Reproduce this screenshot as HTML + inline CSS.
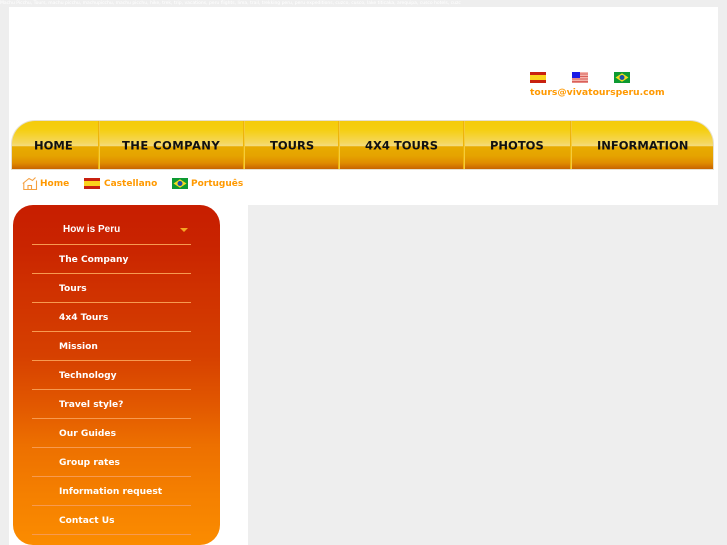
<!DOCTYPE html>
<html>
<head>
<meta charset="utf-8">
<style>
html,body{margin:0;padding:0;width:727px;height:545px;overflow:hidden;background:#eeeeee;font-family:"DejaVu Sans",sans-serif}
.a{position:absolute}
#page{position:relative;width:727px;height:545px;overflow:hidden;filter:blur(.3px)}
.nav{position:absolute;top:146px;line-height:1;transform:translateY(-50%);font-size:11.5px;font-weight:bold;color:#111;white-space:nowrap}
.sep{position:absolute;top:121px;width:1px;height:48px;background:#eeb40a;box-shadow:1px 0 0 #f5cb3a}
.lnk{position:absolute;font-size:9px;font-weight:bold;color:#ff9900;white-space:nowrap;line-height:12px}
.m{position:absolute;left:59px;font-size:9.1px;font-weight:bold;color:#fff;white-space:nowrap;line-height:12px}
.l{position:absolute;left:32px;width:159px;height:1px;background:#f79a50}
svg{display:block;position:absolute}
</style>
</head>
<body>
<div id="page">
<div class="a" style="left:0;top:0;width:461px;font-size:4.5px;line-height:7px;color:#fff;white-space:nowrap;overflow:hidden">Machu Picchu, Tours, machu picchu, machupicchu, machu picchu, hike, trek, trip, vacations, peru flights, lima, trail, trekking peru, peru expeditions, cuzco, cusco, lake titicaka, arequipa, cusco hotels, cuzco, nazca, arequipa</div>
<div class="a" style="left:9px;top:7px;width:709px;height:198px;background:#fff"></div>
<div class="a" style="left:9px;top:205px;width:239px;height:340px;background:#fff"></div>

<!-- header flags -->
<svg style="left:530px;top:72px" width="16" height="11" viewBox="0 0 16 11"><rect width="16" height="11" fill="#c8200f"/><rect y="3" width="16" height="5" fill="#fbd21c"/></svg>
<svg style="left:572px;top:72px" width="16" height="11" viewBox="0 0 16 11"><rect width="16" height="11" fill="#f4b4ac"/><rect y="1.5" width="16" height="1" fill="#d9605a"/><rect y="4" width="16" height="1" fill="#d9605a"/><rect y="6.500" width="16" height="1" fill="#d9605a"/><rect y="9" width="16" height="1.500" fill="#d9605a"/><rect width="8" height="6" fill="#1a1ae6"/></svg>
<svg style="left:614px;top:72px" width="16" height="11" viewBox="0 0 16 11"><rect width="16" height="11" fill="#0d9a32"/><path d="M8 1.200L14.500 5.500 8 9.800 1.500 5.500z" fill="#f2dc20"/><circle cx="8" cy="5.500" r="2.500" fill="#1c4fa8"/></svg>
<div class="lnk" style="left:530px;top:87px;font-size:9.25px">tours@vivatoursperu.com</div>

<!-- nav bar -->
<div class="a" style="left:11px;top:120px;width:703px;height:50px;border-radius:24px 24px 0 0;background:#e6e0d0"></div>
<div class="a" style="left:12px;top:121px;width:701px;height:48px;border-radius:23px 23px 0 0;background:linear-gradient(to bottom,#f5cb0b 0,#f5cf12 9px,#f5d75e 22px,#f3dc80 25px,#e8ab00 25.500px,#e5a300 35px,#e08c00 42px,#c86400 48px)"></div>
<div class="sep" style="left:98px"></div>
<div class="sep" style="left:243px"></div>
<div class="sep" style="left:338px"></div>
<div class="sep" style="left:463px"></div>
<div class="sep" style="left:570px"></div>
<div class="nav" style="left:34px">HOME</div>
<div class="nav" style="left:122px;letter-spacing:.45px">THE COMPANY</div>
<div class="nav" style="left:270px">TOURS</div>
<div class="nav" style="left:365px">4X4 TOURS</div>
<div class="nav" style="left:490px">PHOTOS</div>
<div class="nav" style="left:597px">INFORMATION</div>

<!-- language row -->
<svg style="left:22px;top:176px" width="16" height="14" viewBox="0 0 16 14" fill="none" stroke="#f5a040" stroke-width="1.100"><path d="M.8 7.500L7 2.500 10.500 4.500 13.500 1.500M1.800 7V13.500H14.500V4.500"/><path d="M6 13.500V9.500H9.500V13.500"/></svg>
<div class="lnk" style="left:40px;top:178px">Home</div>
<svg style="left:84px;top:178px" width="16" height="11" viewBox="0 0 16 11"><rect width="16" height="11" fill="#c8200f"/><rect y="3" width="16" height="5" fill="#fbd21c"/></svg>
<div class="lnk" style="left:104px;top:178px">Castellano</div>
<svg style="left:172px;top:178px" width="16" height="11" viewBox="0 0 16 11"><rect width="16" height="11" fill="#0d9a32"/><path d="M8 1.200L14.500 5.500 8 9.800 1.500 5.500z" fill="#f2dc20"/><circle cx="8" cy="5.500" r="2.500" fill="#1c4fa8"/></svg>
<div class="lnk" style="left:191px;top:178px">Português</div>

<!-- side menu -->
<div class="a" style="left:13px;top:205px;width:207px;height:340px;border-radius:20px;background:linear-gradient(to bottom,#c81e00 0,#c92400 40px,#cf3000 80px,#d64000 150px,#e25800 200px,#ed7000 240px,#f58000 290px,#fb8c00 340px)"></div>
<div class="a" style="left:63px;top:224px;font-weight:bold;color:#fff;line-height:12px;font-family:'Liberation Sans',sans-serif;font-size:10px">How is Peru</div>
<div class="a" style="left:180px;top:228px;width:0;height:0;border-left:4px solid transparent;border-right:4px solid transparent;border-top:4px solid #f5a623"></div>
<div class="l" style="top:244px"></div>
<div class="m" style="top:254px">The Company</div>
<div class="l" style="top:273px"></div>
<div class="m" style="top:283px">Tours</div>
<div class="l" style="top:302px"></div>
<div class="m" style="top:312px">4x4 Tours</div>
<div class="l" style="top:331px"></div>
<div class="m" style="top:341px">Mission</div>
<div class="l" style="top:360px"></div>
<div class="m" style="top:370px">Technology</div>
<div class="l" style="top:389px"></div>
<div class="m" style="top:399px">Travel style?</div>
<div class="l" style="top:418px"></div>
<div class="m" style="top:428px">Our Guides</div>
<div class="l" style="top:447px"></div>
<div class="m" style="top:457px">Group rates</div>
<div class="l" style="top:476px"></div>
<div class="m" style="top:486px">Information request</div>
<div class="l" style="top:505px"></div>
<div class="m" style="top:515px">Contact Us</div>
<div class="l" style="top:534px"></div>
</div>
</body>
</html>
